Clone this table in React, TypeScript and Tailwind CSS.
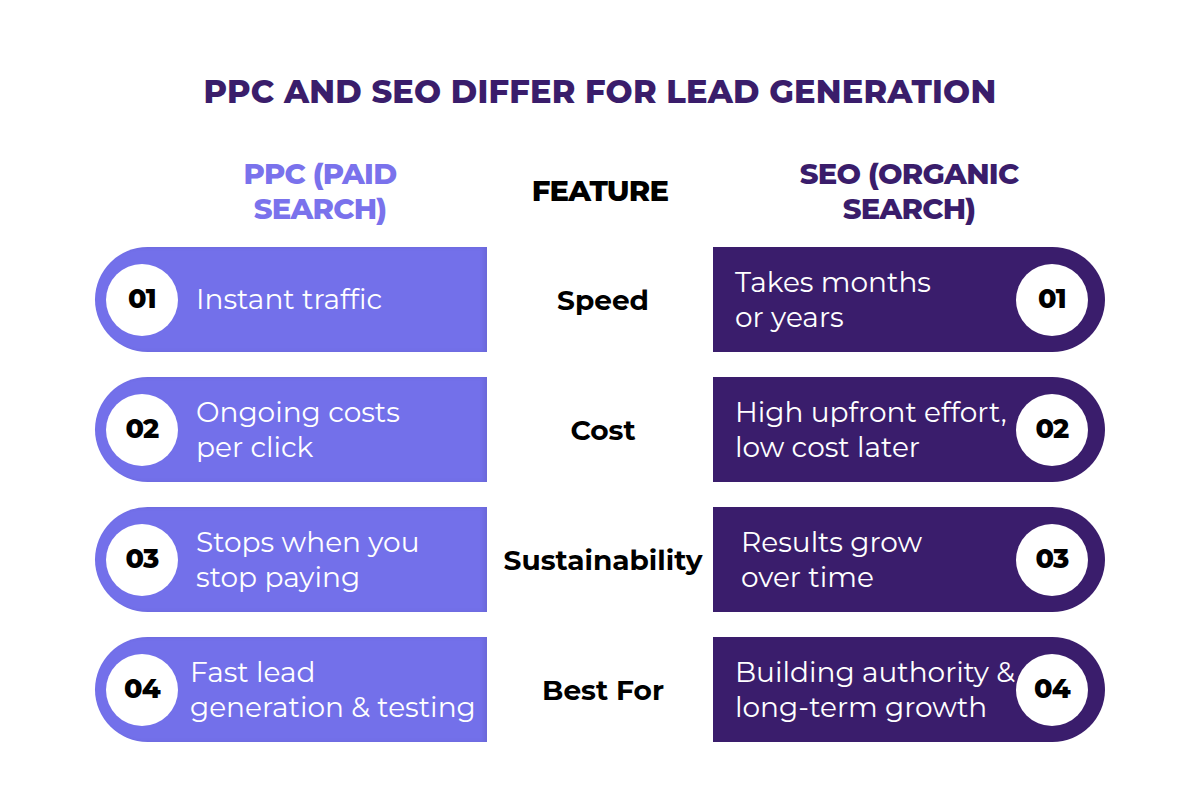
const rows = [
  { n: '01', feature: 'Speed', ppc: ['Instant traffic'], seo: ['Takes months', 'or years'], lp: 'pl-0', rp: 'pl-[22px]' },
  { n: '02', feature: 'Cost', ppc: ['Ongoing costs', 'per click'], seo: ['High upfront effort,', 'low cost later'], lp: 'pl-0', rp: 'pl-[22px]' },
  { n: '03', feature: 'Sustainability', ppc: ['Stops when you', 'stop paying'], seo: ['Results grow', 'over time'], lp: 'pl-0', rp: 'pl-[28px]' },
  { n: '04', feature: 'Best For', ppc: ['Fast lead', 'generation & testing'], seo: ['Building authority &', 'long-term growth'], lp: '-ml-[6px]', rp: 'pl-[22px]' },
];

const Badge = ({ n }: { n: string }) => (
  <div className="w-[72px] h-[72px] shrink-0 rounded-full bg-white flex items-center justify-center text-[27px] font-extrabold text-black tracking-tight">
    {n}
  </div>
);

export default function App() {
  return (
    <div
      className="w-[1200px] h-[800px] bg-white flex flex-col items-center"
      style={{ fontFamily: '"Montserrat", "Lato", "Open Sans", sans-serif' }}
    >
      <h1 className="mt-[72px] text-[32px] leading-[40px] font-extrabold text-[#3a1d6b] tracking-[0.2px]">
        PPC AND SEO DIFFER FOR LEAD GENERATION
      </h1>

      <div className="mt-[36px] w-[1010px] grid grid-cols-[392px_226px_392px]">
        <div className="h-[86px] pl-[58px] flex items-center justify-center text-center text-[29px] leading-[35px] font-extrabold text-[#7a72ec] tracking-tight">
          PPC (PAID
          <br />
          SEARCH)
        </div>
        <div className="h-[86px] flex items-center justify-center text-[29px] font-extrabold text-black tracking-tight">
          FEATURE
        </div>
        <div className="h-[86px] flex items-center justify-center text-center text-[29px] leading-[35px] font-extrabold text-[#3a1d6b] tracking-tight">
          SEO (ORGANIC
          <br />
          SEARCH)
        </div>
      </div>

      <div className="mt-[13px] w-[1010px] flex flex-col gap-[25px]">
        {rows.map((r) => (
          <div key={r.n} className="grid grid-cols-[392px_226px_392px] h-[105px]">
            <div className="bg-[#7370ea] rounded-l-full flex items-center pl-[11px] gap-[18px] shadow-[inset_-3px_0_4px_rgba(0,0,0,0.08)]">
              <Badge n={r.n} />
              <div className={`text-white text-[28px] leading-[35px] font-normal ${r.lp}`}>
                {r.ppc.map((l) => (
                  <div key={l}>{l}</div>
                ))}
              </div>
            </div>
            <div className="flex items-center justify-center pl-[6px] text-[28px] font-bold text-black">{r.feature}</div>
            <div className={`bg-[#3a1d6c] rounded-r-full flex items-center justify-between pr-[17px] ${r.rp}`}>
              <div className="text-white text-[28px] leading-[35px] font-normal">
                {r.seo.map((l) => (
                  <div key={l}>{l}</div>
                ))}
              </div>
              <Badge n={r.n} />
            </div>
          </div>
        ))}
      </div>
    </div>
  );
}
